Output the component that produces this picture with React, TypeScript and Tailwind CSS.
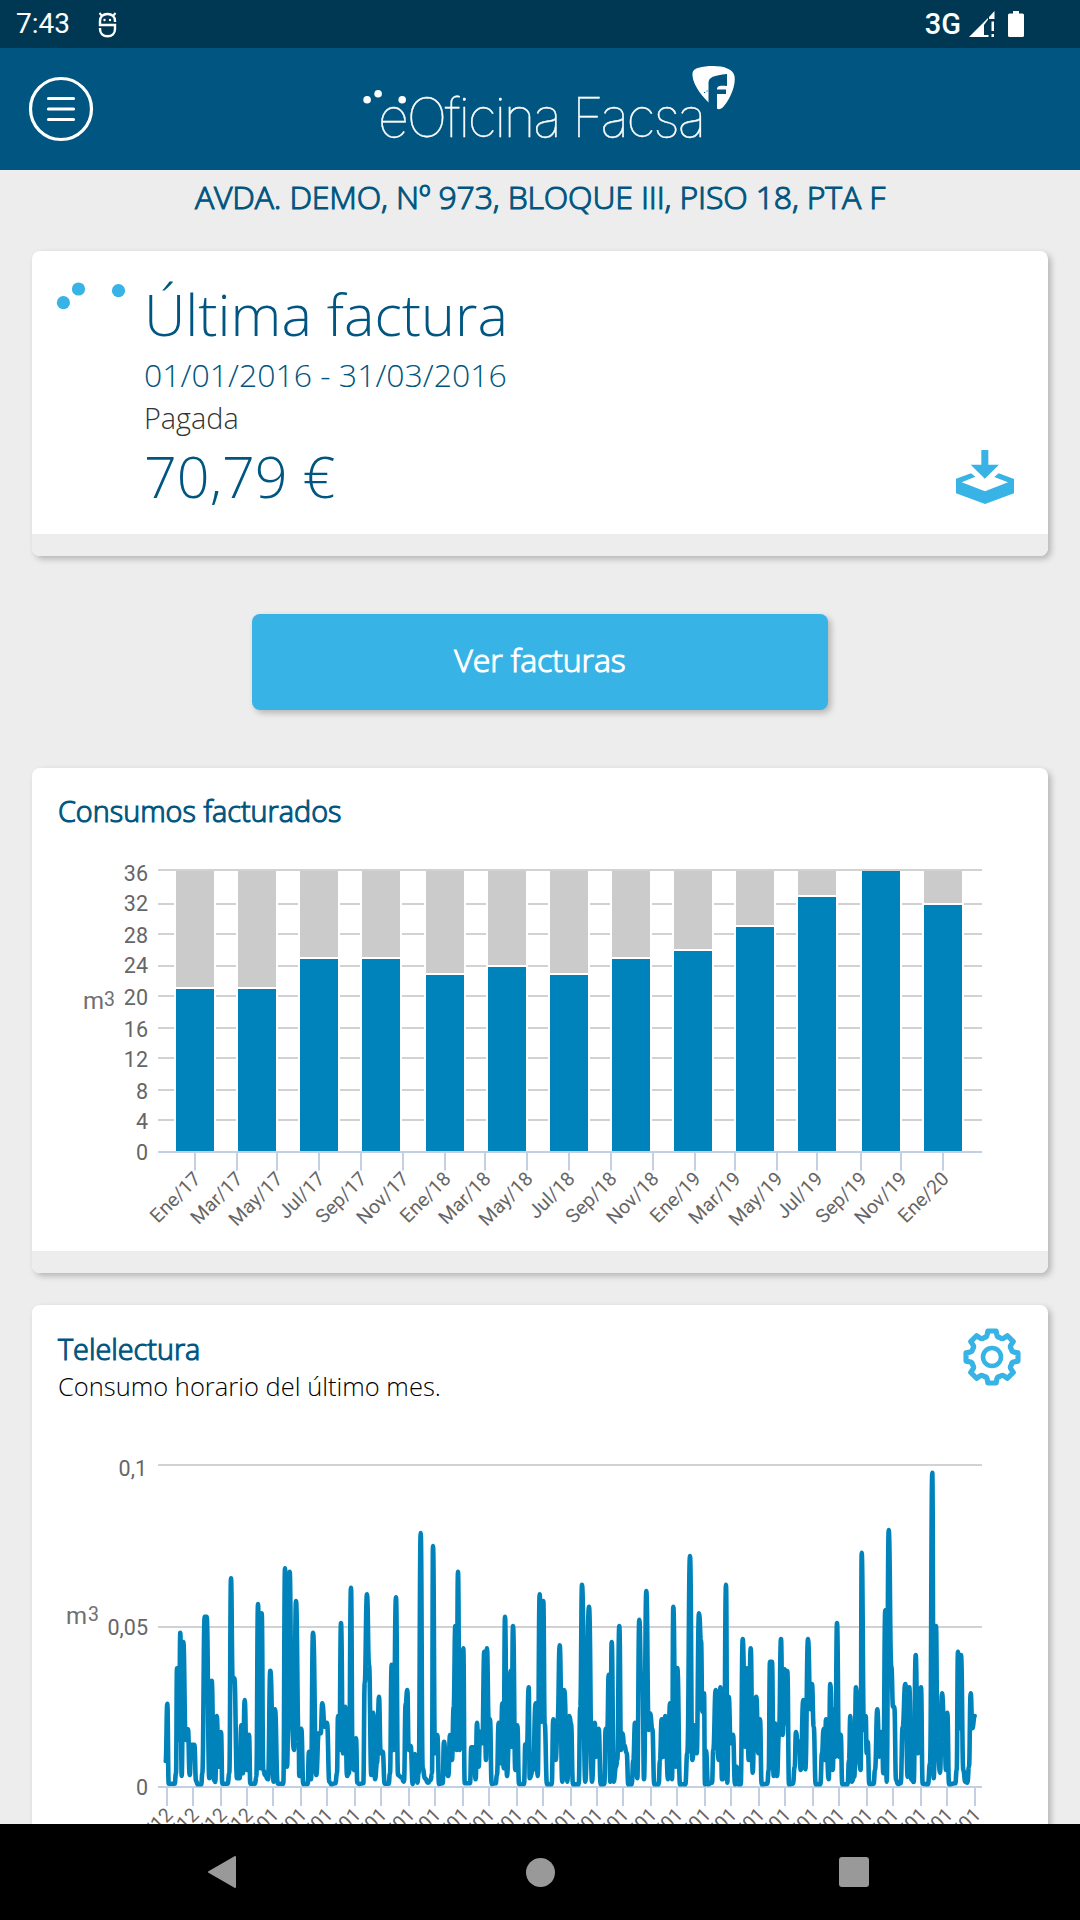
import React from 'react';

const BAR_LEFTS = [176, 238, 300, 362, 426, 488, 550, 612, 674, 736, 798, 862, 924];
const BAR_TOPS = [989, 989, 959, 959, 975, 967, 975, 959, 951, 927, 897, 871, 905];

const BAR_GRID = [
  { label: '36', line: 870, text: 880.5 },
  { label: '32', line: 904, text: 910.5 },
  { label: '28', line: 934, text: 942.5 },
  { label: '24', line: 966, text: 973 },
  { label: '20', line: 996, text: 1004.5 },
  { label: '16', line: 1028, text: 1036.5 },
  { label: '12', line: 1058, text: 1067 },
  { label: '8', line: 1090, text: 1098.5 },
  { label: '4', line: 1120, text: 1129 },
];

const MONTHS: [string, number][] = [
  ['Ene/17', 195], ['Mar/17', 237], ['May/17', 277], ['Jul/17', 319], ['Sep/17', 361],
  ['Nov/17', 403], ['Ene/18', 445], ['Mar/18', 485], ['May/18', 527], ['Jul/18', 569],
  ['Sep/18', 611], ['Nov/18', 653], ['Ene/19', 695], ['Mar/19', 735], ['May/19', 777],
  ['Jul/19', 817], ['Sep/19', 861], ['Nov/19', 901], ['Ene/20', 943],
];

const DAYS: [string, number][] = [
  ['28/12', 167], ['29/12', 193], ['30/12', 221], ['31/12', 247], ['01/01', 273], ['02/01', 301],
  ['03/01', 327], ['04/01', 355], ['05/01', 381], ['06/01', 409], ['07/01', 435], ['08/01', 463],
  ['09/01', 489], ['10/01', 517], ['11/01', 543], ['12/01', 571], ['13/01', 597], ['14/01', 623],
  ['15/01', 651], ['16/01', 677], ['17/01', 705], ['18/01', 731], ['19/01', 759], ['20/01', 785],
  ['21/01', 813], ['22/01', 839], ['23/01', 867], ['24/01', 893], ['25/01', 921], ['26/01', 947],
  ['27/01', 975],
];

// Hourly readings in thirds of a pixel, split in three stretches of the month
const READINGS = [
  {
    start: 140,
    points:
      '77,963 82,791 86,1031 104,1031 108,1000 111,685 117,900 121,578 125,1008 130,606 137,900 144,868 149,1005 154,914 163,914 168,1022 173,1033 184,1033 187,1000 194,530 200,530 208,1015 215,722 222,1020 226,1026 230,828 236,980 243,876 247,1031 263,1031 268,1000 273,415 278,720 283,715 291,1015 299,1015 304,856 309,1000 314,780 320,990 327,884 331,1031 345,1031 349,1010 354,492 360,985 365,520 370,990 375,1005 384,1018 391,692 401,1025 405,808 413,1031 430,1031 435,385 441,980 449,395 455,850 462,930 468,483 476,900 478,1008 484,866 490,1032 503,1032 507,935 513,1018 519,578 529,1005 536,880 542,880 547,790 554,860 561,848 568,1025 574,1033 586,1030 591,1000 594,828 598,930 603,549 609,940 616,800 621,1008 627,1000 633,443 638,980 643,990 648,895 652,1028 658,1032 670,1030 674,730 681,463 687,674 694,1005 700,818 705,1018 711,970 717,770 722,940 728,935 734,1031 746,1031 750,1000 755,674 761,930 768,472 774,1005 784,1012 792,1025 797,790 802,750 806,930 812,918 818,1032 825,942 832,1028 836,1000 842,279 848,985 855,1015 864,1028 872,1020 876,1000 879,318',
  },
  {
    start: 400,
    points:
      '105,940 112,885 117,1032 128,1030 132,905 139,1000 145,1008 150,885 156,960 161,800 166,558 170,930 174,395 179,930 184,860 190,625 194,1030 210,1030 214,922 221,922 227,1018 231,848 236,980 240,875 247,910 253,635 258,960 261,625 266,840 270,838 275,1032 287,1030 291,1005 296,848 302,970 307,790 311,985 315,530 321,1008 327,900 332,692 335,920 339,558 346,990 352,856 357,1032 372,1032 376,913 381,920 386,742 389,1015 399,990 407,790 413,1008 419,463 424,845 430,483 434,850 441,1033 455,1033 460,838 467,960 473,840 479,616 487,1025 493,750 502,1025 508,828 513,850 519,1033 536,1033 541,800 546,434 556,1025 567,500 576,1025 584,848 589,950 596,866 602,1033 613,1032 617,866 622,870 626,704 631,1025 635,606 641,1025 648,980 652,960 658,558 663,930 667,880 673,915 680,940 685,1033 695,1033 700,960 705,848 712,1015 718,539 724,740 728,732 732,1018 739,453 746,870 750,820 757,866 763,1033 776,1033 780,960 785,838 790,950 796,828 804,1018 810,790 816,1018 820,500 827,980 832,684 840,1033 856,1033 862,940 870,348 877,960 885,856 890,940 897,520',
  },
  {
    start: 700,
    points:
      '3,600 7,815 12,760 15,1033 18,932 24,1033 36,1028 40,930 47,750 56,960 61,742 66,1018 72,1015 78,434 82,1028 86,770 92,910 99,884 105,1033 110,980 115,1033 122,1033 128,597 136,920 141,685 146,960 152,625 158,998 163,860 169,770 175,940 180,838 185,1033 202,1031 206,990 210,665 216,665 221,1008 225,850 231,1008 237,880 243,597 248,885 254,688 259,850 262,693 267,1033 279,1031 284,980 288,876 294,930 298,905 302,990 310,780 316,988 324,597 331,808 336,732 341,860 347,1033 361,1033 366,940 371,866 375,960 378,838 386,1018 391,732 398,990 403,808 406,950 411,549 417,950 422,884 427,1033 443,1033 447,960 451,828 455,1025 463,1010 468,742 476,960 482,990 485,338 492,870 497,828 500,940 503,905 508,1032 521,1031 525,990 532,808 538,950 546,875 550,1000 556,511 560,1025 566,270 574,680 579,800 583,800 588,1020 594,1032 602,1030 608,860 616,732 623,1010 628,742 634,1018 641,1026 647,645 653,940 658,850 663,742 668,1031 684,1033 690,970 697,98 701,1015 708,558 712,900 720,998 726,760 734,900 738,990 742,818 747,1033 766,1030 770,990 774,635 779,865 783,645 790,990 796,1025 802,1028 807,980 812,760 817,865 824,828',
  },
];

const POINTS = READINGS.flatMap(({ start, points }) =>
  points.split(' ').map((p) => {
    const [x, y] = p.split(',').map(Number);
    return [start + x / 3, 1440 + y / 3];
  })
);

const LINE = POINTS.map(([x, y], i) => {
  if (i === 0) return `M${x.toFixed(1)} ${y.toFixed(1)}`;
  const [px, py] = POINTS[i - 1];
  const mid = ((px + x) / 2).toFixed(1);
  return `C${mid} ${py.toFixed(1)} ${mid} ${y.toFixed(1)} ${x.toFixed(1)} ${y.toFixed(1)}`;
}).join('');

const gearPath = () => {
  const at = (deg: number, r: number) => {
    const a = (deg * Math.PI) / 180;
    return `${(Math.sin(a) * r).toFixed(2)} ${(-Math.cos(a) * r).toFixed(2)}`;
  };
  let d = '';
  for (let i = 0; i < 8; i++) {
    const c = i * 45;
    d += `${i === 0 ? 'M' : 'L'}${at(c - 9, 26.3)}L${at(c + 9, 26.3)}L${at(c + 12.5, 22.6)}Q${at(c + 15, 20.3)} ${at(c + 22.5, 20.9)}Q${at(c + 30, 20.3)} ${at(c + 32.5, 22.6)}`;
  }
  return d + 'Z';
};

const StatusBar: React.FC = () => (
  <div className="flex h-12 shrink-0 items-center bg-[#003853] pl-4 pr-14 font-[Roboto] text-white">
    <span className="w-[82px] text-[28px] leading-[48px]">7:43</span>
    <svg width="19" height="26" viewBox="0 0 19 26" className="mt-px" fill="none" stroke="white" strokeWidth="2.4">
      <path d="M17 10V9C17 4.500 14 2 9.500 2S2 4.500 2 9V13H17V17C17 21.500 14 24.300 9.500 24.300S2 21.500 2 17V16" />
      <path d="M1.500 1L4 4M17.500 1L15 4" strokeWidth="2" />
      <circle cx="6.500" cy="8" r="1.200" fill="white" stroke="none" />
      <circle cx="12" cy="8" r="1.200" fill="white" stroke="none" />
    </svg>
    <span className="ml-auto text-[29px] font-medium leading-[48px]">3G</span>
    <svg width="27" height="27" viewBox="0 0 27 27" className="ml-2" fill="white">
      <path d="M0 26L19 7V26Z M20 6L25.500 0V8H20Z" />
      <path d="M15 24V14L19.500 8V24Z" fill="#003853" />
      <path d="M17 24h2.500v2H17zM22.500 10.500H25V20h-2.500zM22.500 23H25v3h-2.500z" />
    </svg>
    <svg width="16" height="26" viewBox="0 0 16 26" className="ml-3" fill="white">
      <path d="M5 0h6v2.500h3.500a1.500 1.500 0 0 1 1.500 1.500v20.500a1.500 1.500 0 0 1-1.500 1.500h-13a1.500 1.500 0 0 1-1.500-1.500V4a1.500 1.500 0 0 1 1.500-1.500H5z" />
    </svg>
  </div>
);

const Header: React.FC = () => (
  <header className="relative flex h-[122px] shrink-0 items-center justify-center bg-[#005680]">
    <button className="absolute left-[28px] top-[28px]" aria-label="Menú">
      <svg width="66" height="66" viewBox="0 0 66 66" fill="none" stroke="white" strokeWidth="3.2" strokeLinecap="round">
        <circle cx="33" cy="33" r="30.500" />
        <path d="M20.500 22.500H45.500M20.500 33H45.500M20.500 43.500H45.500" />
      </svg>
    </button>
    <svg width="380" height="116" viewBox="360 51 380 116" className="ml-5">
      <g fill="white">
        <circle cx="367.100" cy="99.700" r="3.800" />
        <circle cx="378.100" cy="93.700" r="3.800" />
        <circle cx="402.200" cy="99.700" r="3.800" />
        <text x="378" y="137" textLength="328" stroke="white" strokeWidth="0.4" className="font-[Inter] text-[54px] font-thin">eOficina Facsa</text>
        <path d="M692.500 73C693 68 702 66 713 66C724 66 733 69 734.500 76C736 84 731 98 724 106C721 109.500 718 110 715.500 108C704 100 691.500 84 692.500 73Z" />
      </g>
      <path d="M708.500 105V83C708.500 77 714 75.500 727 74V86C719 85 717 86 717 89.500H726V94H717V110Z" fill="#005680" />
      <path d="M704 92.500h1.200M706.500 91h1.200" stroke="#005680" />
    </svg>
  </header>
);

const Card: React.FC<{ className?: string; children: React.ReactNode }> = ({ className = '', children }) => (
  <section className={`overflow-hidden rounded-lg bg-white shadow-[3px_3px_6px_rgba(0,0,0,0.24)] ${className}`}>
    {children}
  </section>
);

const CardTitle: React.FC<{ children: React.ReactNode }> = ({ children }) => (
  <h3 className="pl-[26px] text-[28.8px] font-light leading-[45px] [-webkit-text-stroke:1.1px_#005680]">{children}</h3>
);

const BarChart: React.FC = () => (
  <svg width="1016" height="419" viewBox="32 832 1016 419" className="-mt-px block font-[Roboto]">
    {BAR_GRID.map((g) => (
      <g key={g.label}>
        <rect x="158" y={g.line - 1} width="824" height="2" fill="#d2d2d2" />
        <text x="148" y={g.text} textAnchor="end" fill="#666" className="text-[21.5px]">{g.label}</text>
      </g>
    ))}
    <text x="148" y="1160" textAnchor="end" fill="#666" className="text-[21.5px]">0</text>
    {BAR_LEFTS.map((x, i) => (
      <g key={x}>
        <rect x={x - 2} y="871" width="42" height="280" fill="white" />
        <rect x={x} y="871" width="38" height={BAR_TOPS[i] === 871 ? 0 : BAR_TOPS[i] - 873} fill="#cbcbcb" />
        <rect x={x} y={BAR_TOPS[i]} width="38" height={1151 - BAR_TOPS[i]} fill="#0083bb" />
      </g>
    ))}
    <rect x="158" y="1151" width="824" height="2" fill="#c3cfe2" />
    {MONTHS.map(([label, x]) => (
      <g key={label}>
        <rect x={x - 1} y="1152" width="2" height="18.500" fill="#c3cfe2" />
        <text transform={`translate(${x + 7} 1180) rotate(-45)`} textAnchor="end" fill="#666" className="text-[19.5px]">{label}</text>
      </g>
    ))}
    <text x="83" y="1009" fill="#707070" className="text-[24px]">m</text>
    <text x="104" y="1005.500" fill="#707070" className="text-[19.5px]">3</text>
  </svg>
);

const LineChart: React.FC = () => (
  <svg width="1016" height="460" viewBox="32 1400 1016 460" className="-mt-0.5 block font-[Roboto]">
    <rect x="158" y="1464" width="824" height="2" fill="#d2d2d2" />
    <rect x="158" y="1626" width="824" height="2" fill="#d2d2d2" />
    <rect x="158" y="1786" width="824" height="2" fill="#c3cfe2" />
    <g fill="#666" textAnchor="end" className="text-[21.5px]">
      <text x="147" y="1475.500">0,1</text>
      <text x="148" y="1635">0,05</text>
      <text x="148" y="1795">0</text>
    </g>
    {DAYS.map(([label, x]) => (
      <g key={label}>
        <rect x={x - 1} y="1788" width="2" height="18" fill="#c3cfe2" />
        <text transform={`translate(${x + 7} 1816) rotate(-45)`} textAnchor="end" fill="#666" className="text-[19.5px]">{label}</text>
      </g>
    ))}
    <path d={LINE} fill="none" stroke="#0083bb" strokeWidth="4.6" strokeLinejoin="round" strokeLinecap="round" />
    <text x="66" y="1624" fill="#707070" className="text-[24px]">m</text>
    <text x="88" y="1620.500" fill="#707070" className="text-[19.5px]">3</text>
  </svg>
);

const App: React.FC = () => {
  return (
    <div className="flex h-[1920px] w-[1080px] flex-col overflow-hidden bg-[#ededed] font-['Open_Sans'] text-[#005680]">
      <StatusBar />
      <Header />

      <main className="flex flex-1 flex-col overflow-hidden px-8">
        <h1 className="whitespace-nowrap text-center text-[32px] font-light leading-[54px] tracking-[-0.16px] [-webkit-text-stroke:1.1px_#005680]">
          AVDA. DEMO, Nº 973, BLOQUE III, PISO 18, PTA F
        </h1>

        {/* Last invoice */}
        <Card className="mt-[27px] flex h-[305px] shrink-0 flex-col">
          <div className="relative flex h-[283px] pt-7">
            <svg width="112" height="40" viewBox="0 0 112 40" fill="#37b3e6" className="shrink-0">
              <circle cx="31.400" cy="23.700" r="6.600" />
              <circle cx="46.500" cy="10" r="6.600" />
              <circle cx="86.500" cy="11.700" r="6.600" />
            </svg>
            <div className="whitespace-nowrap font-light">
              <h2 className="text-[57.5px] leading-[71px]">Última factura</h2>
              <p className="text-[32px] leading-[50px]">01/01/2016 - 31/03/2016</p>
              <p className="text-[28.8px] leading-9 text-[#333]">Pagada</p>
              <p className="text-[57.5px] leading-[81px]">70,79 €</p>
            </div>
            <button className="absolute bottom-[30px] right-[34px]" aria-label="Descargar">
              <svg width="58" height="54" viewBox="707 91 174 162" fill="#37b3e6">
                <path d="M783 91H804V135H836L793.500 177L751 135H783Z" />
                <path d="M707 177L752 161L765 171L724 188L794 215L863 188L822 172L835 161L881 178V221L794 253L707 221Z" />
              </svg>
            </button>
          </div>
          <div className="h-[22px] bg-[#ededed]" />
        </Card>

        <button className="mx-auto my-[58px] h-24 w-[576px] shrink-0 rounded-lg bg-[#37b3e6] pb-1 text-[32px] font-light tracking-[-0.1px] text-white shadow-[3px_3px_6px_rgba(0,0,0,0.24)] [-webkit-text-stroke:1.1px_white]">
          Ver facturas
        </button>

        {/* Billed consumption */}
        <Card className="h-[505px] shrink-0 pt-5">
          <CardTitle>Consumos facturados</CardTitle>
          <BarChart />
          <div className="h-[22px] bg-[#ededed]" />
        </Card>

        {/* Remote readings */}
        <Card className="relative mt-8 h-[560px] shrink-0 pt-[21px]">
          <CardTitle>Telelectura</CardTitle>
          <p className="pl-[26px] text-[25.5px] font-light leading-[31px] text-black">Consumo horario del último mes.</p>
          <button className="absolute right-[26px] top-[22px]" aria-label="Configurar">
            <svg width="60" height="60" viewBox="-30 -30 60 60" fill="none" stroke="#37b3e6" strokeLinejoin="round">
              <path d={gearPath()} strokeWidth="5.200" />
              <circle r="9" strokeWidth="4.600" />
            </svg>
          </button>
          <LineChart />
        </Card>
      </main>

      <nav className="flex h-24 shrink-0 items-center justify-between bg-black pl-[207px] pr-[211px]">
        <svg width="30" height="34" viewBox="0 0 30 34" fill="#999" stroke="#999" strokeWidth="2" strokeLinejoin="round">
          <path d="M28 2V32L2 17Z" />
        </svg>
        <div className="ml-1 size-[29px] rounded-full bg-[#999]" />
        <div className="size-[30px] rounded-[3px] bg-[#999]" />
      </nav>
    </div>
  );
};

export default App;
